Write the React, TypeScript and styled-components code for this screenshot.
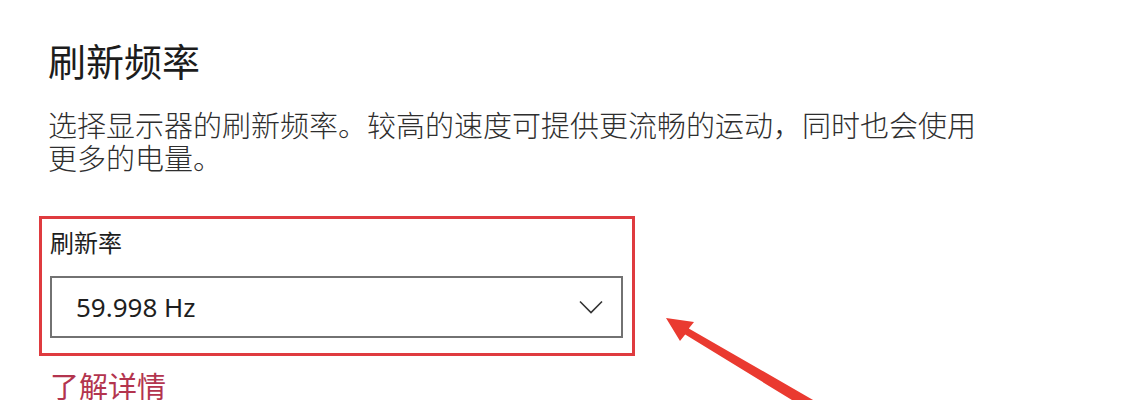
import React from 'react';
import styled, { createGlobalStyle } from 'styled-components';

const GlobalStyle = createGlobalStyle`
  html, body {
    margin: 0;
    padding: 0;
    background: #fff;
  }
  body {
    font-family: "Noto Sans", "Noto Sans CJK SC", sans-serif;
  }
`;

const cjk = `"Noto Sans CJK SC", "Noto Sans", sans-serif`;

const Page = styled.div`
  position: relative;
  width: 1131px;
  height: 400px;
  overflow: hidden;
  padding: 35px 0 0 48px;
  box-sizing: border-box;
`;

const Title = styled.h1`
  margin: 0;
  font-family: ${cjk};
  font-size: 38px;
  line-height: 50px;
  font-weight: 400;
  color: #1c1c1c;
`;

const Description = styled.p`
  margin: 23px 0 0;
  max-width: 935px;
  font-family: ${cjk};
  font-size: 29px;
  line-height: 33px;
  font-weight: 300;
  color: #2e2e2e;
`;

const Highlight = styled.section`
  margin: 42px 0 0 -9px;
  width: 596px;
  box-sizing: border-box;
  border: 3px solid #df3b3f;
  padding: 8px 9px 15px 8px;
`;

const FieldLabel = styled.div`
  font-family: ${cjk};
  font-size: 24px;
  line-height: 30px;
  color: #1e1e1e;
`;

const Select = styled.div`
  margin-top: 19px;
  height: 62px;
  box-sizing: border-box;
  border: 2px solid #727272;
  display: flex;
  align-items: center;
  justify-content: space-between;
  padding: 0 18px 0 24px;
  background: #fff;
`;

const SelectValue = styled.span`
  font-family: "Noto Sans", sans-serif;
  font-size: 26px;
  color: #1e1e1e;
`;

const Chevron = styled.svg`
  width: 24px;
  height: 14px;
  display: block;
`;

const LearnMore = styled.a`
  display: block;
  margin-top: 11px;
  margin-left: 2px;
  font-family: ${cjk};
  font-size: 29px;
  line-height: 36px;
  color: #b3344e;
  text-decoration: none;
`;

const Arrow = styled.svg`
  position: absolute;
  left: 0;
  top: 0;
  width: 1131px;
  height: 400px;
  pointer-events: none;
`;

const App: React.FC = () => {
  return (
    <>
      <GlobalStyle />
      <Page>
        <Title>刷新频率</Title>
        <Description>
          选择显示器的刷新频率。较高的速度可提供更流畅的运动，同时也会使用更多的电量。
        </Description>
        <Highlight>
          <FieldLabel>刷新率</FieldLabel>
          <Select>
            <SelectValue>59.998 Hz</SelectValue>
            <Chevron viewBox="0 0 24 14">
              <path d="M1 1.5 L12 12.5 L23 1.5" fill="none" stroke="#333" strokeWidth="1.6" />
            </Chevron>
          </Select>
        </Highlight>
        <LearnMore href="#">了解详情</LearnMore>
        <Arrow viewBox="0 0 1131 400">
          <polygon
            points="666,318 694,322 688.8,328.5 844.9,418.3 838.7,428.7 685.2,334.5 680,341"
            fill="#ea3a30"
          />
        </Arrow>
      </Page>
    </>
  );
};

export default App;
